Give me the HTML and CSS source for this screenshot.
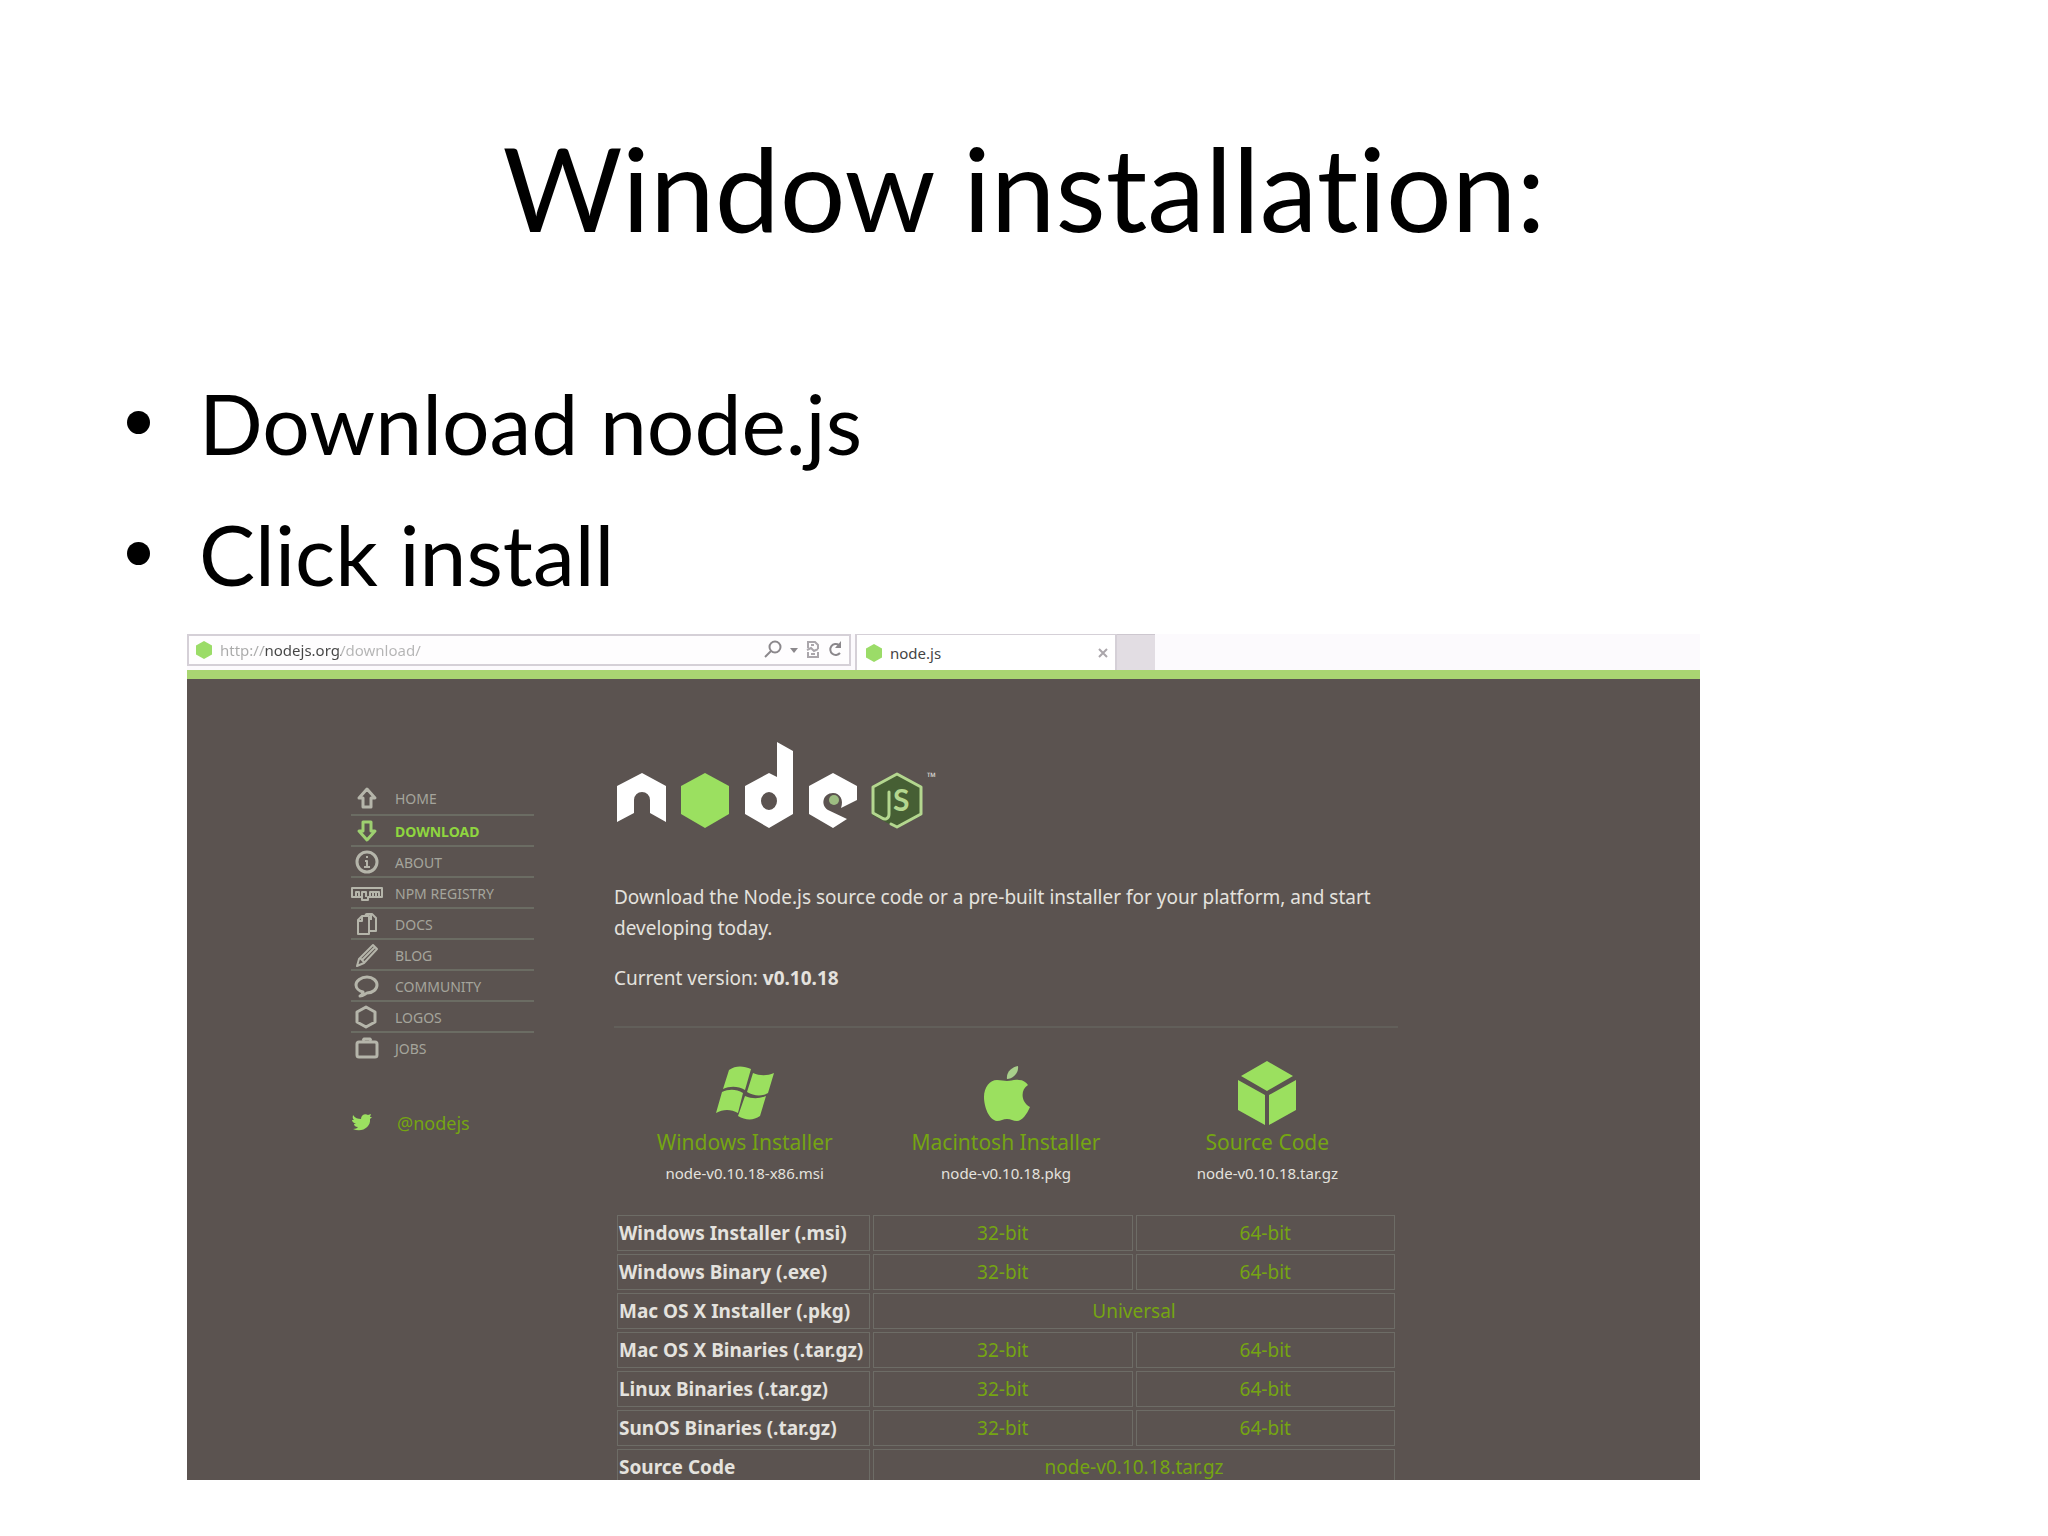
FILE: index.html
```html
<!DOCTYPE html>
<html lang="en">
<head>
<meta charset="utf-8">
<title>Window installation</title>
<link rel="stylesheet" href="styles.css">
</head>
<body>
<main class="slide">
  <h1 class="title">Window installation:</h1>
  <ul class="steps">
    <li>Download node.js</li>
    <li>Click install</li>
  </ul>
  <section class="browser" aria-label="node.js download page">
    <div class="chrome">
      <div class="address">
        <svg class="favicon" viewBox="0 0 18 18" aria-hidden="true"><path d="M9 0l8 4.500v9L9 18l-8-4.500v-9z" fill="#9bdc68"/></svg>
        <input class="url" type="text" aria-label="Address" value="http://nodejs.org/download/">
        <button class="tool" aria-label="Search"><svg width="20" height="20" viewBox="0 0 20 20"><circle cx="12" cy="7" r="5.500"/><path d="M8 11l-6 6"/></svg></button>
        <button class="tool" aria-label="Show history"><svg width="10" height="20" viewBox="0 0 10 20"><path class="solid" d="M1 8h8l-4 5z"/></svg></button>
        <button class="tool pale" aria-label="Compatibility view"><svg width="16" height="20" viewBox="0 0 16 20"><path d="M3 8V2h7l3 3v4M2 10l4-2 3 3 4-2M3 12v5h10v-5M6 14h4M6 5h3"/></svg></button>
        <button class="tool" aria-label="Refresh"><svg width="16" height="20" viewBox="0 0 16 20"><path d="M13 13a5.500 5.500 0 1 1-1-8"/><path class="solid" d="M14 1v7H8z"/></svg></button>
      </div>
      <div class="tab">
        <svg class="favicon" viewBox="0 0 18 18" aria-hidden="true"><path d="M9 0l8 4.500v9L9 18l-8-4.500v-9z" fill="#9bdc68"/></svg>
        <span class="tab-name">node.js</span>
        <button class="tool pale" aria-label="Close tab"><svg width="12" height="12" viewBox="0 0 12 12"><path d="M2 2l8 8M10 2l-8 8"/></svg></button>
      </div>
      <button class="new-tab" aria-label="New tab"></button>
    </div>
    <div class="site">
      <nav class="side">
        <ul class="menu">
          <li><a href="#home"><svg viewBox="0 0 32 26"><path d="M16 4l8 9h-4v9h-8v-9H8z"/></svg>HOME</a></li>
          <li><a class="active" href="#download"><svg viewBox="0 0 32 26"><path d="M16 22l8-9h-4V4h-8v9H8z"/></svg>DOWNLOAD</a></li>
          <li><a href="#about"><svg viewBox="0 0 32 26"><circle cx="16" cy="13" r="10"/><path class="thin" d="M14 12h2v6M13 18h6M15 8h2"/></svg>ABOUT</a></li>
          <li><a href="#npm"><svg viewBox="0 0 32 26"><path class="thin" d="M1 8h30v9H17v3h-6v-3H1zM5 17v-5h3v5M11 17v-5h4v5M19 17v-5h3v5M22 12h3v5M25 12h3v5"/></svg>NPM REGISTRY</a></li>
          <li><a href="#docs"><svg viewBox="0 0 32 26"><path class="thin" d="M7 9l4-4h7v18H7zM11 5v5H7M14 4l2-1h5l4 4v13h-6M20 4v5"/></svg>DOCS</a></li>
          <li><a href="#blog"><svg viewBox="0 0 32 26"><path class="thin" d="M6 24l2-7L22 3l4 4-13 14zM9 16l4 4M11 18L24 5"/></svg>BLOG</a></li>
          <li><a href="#community"><svg viewBox="0 0 32 26"><path d="M9 23c2-1 3-2 3-4-4-1-7-4-7-7 0-4 5-8 11-8s10 4 10 8-4 8-10 8c-2 1-4 3-7 3z"/></svg>COMMUNITY</a></li>
          <li><a href="#logos"><svg viewBox="0 0 32 26"><path d="M15 3l9 5v10l-9 5-9-5V8z"/></svg>LOGOS</a></li>
          <li><a href="#jobs"><svg viewBox="0 0 32 26"><rect x="6" y="7" width="20" height="15" rx="2"/><path d="M12 6l1-2h6l1 2"/></svg>JOBS</a></li>
        </ul>
        <a class="twitter" href="#twitter"><svg viewBox="0 0 32 26" aria-hidden="true"><path d="M2 19c3 0 4-1 5-2-3 0-4-2-4-3h2c-3-1-4-3-4-4l2 0C1 8 2 6 2 5c2 3 5 4 8 4 0-4 4-6 7-4l3-1-1 3h2l-2 2c1 8-8 14-17 10z"/></svg>@nodejs</a>
      </nav>
      <div class="content">
        <svg class="logo" viewBox="0 0 330 90" role="img" aria-label="node.js">
          <path fill="#fff" d="M3 82V46l25-13 24 13v36l-16-9V60a8 8 0 0 0-16 0v13z"/>
          <path fill="#9be060" d="M91 33l24 13v28L91 88 67 74V46z"/>
          <path fill="#fff" fill-rule="evenodd" d="M131 46l24-13 8 4V2l16 9v63l-24 14-24-14zM147 61a8 9 0 1 0 16 0 8 9 0 0 0-16 0z"/>
          <path fill="#fff" d="M195 46l24-13 24 13v14l-16 8c3-8-1-15-8-15-10 0-13 12-5 17l19 9L219 88 195 74z"/>
          <circle cx="220" cy="60" r="5" fill="#9dbd82"/>
          <path fill="#465f34" d="M283 33l25 13v29l-25 13-25-13V46z"/>
          <path d="M275 52v22c0 5-4 6-7 4l-9-5V47l24-13 24 13v27l-24 13-6-3" fill="none" stroke="#b4d78f" stroke-width="3" stroke-linejoin="round" stroke-linecap="round"/>
          <text class="logo-s" x="279" y="71">S</text>
          <text class="logo-tm" x="313" y="41">™</text>
        </svg>
        <p class="intro">Download the Node.js source code or a pre-built installer for your platform, and start developing today.</p>
        <p class="intro">Current version: <b>v0.10.18</b></p>
        <hr class="rule">
        <div class="installers">
          <a class="installer" href="#win"><svg width="70" height="66" viewBox="0 0 70 66" aria-hidden="true"><path d="M19 10c7-5 15-4 22-1l-6 21c-7-4-15-4-22-1zM43 13c7 3 14 3 21 0l-6 20c-7 4-14 3-21-1zM12 32c7-3 14-3 21 1l-5 20c-7-4-15-4-22 0zM35 36c7 3 14 3 21 0l-6 20c-7 5-15 4-22 0z"/></svg><span class="name">Windows Installer</span><span class="file">node-v0.10.18-x86.msi</span></a>
          <a class="installer" href="#mac"><svg width="70" height="66" viewBox="0 0 70 66" aria-hidden="true"><path class="leaf" d="M36 19c-1-7 5-12 11-13 1 7-5 13-11 13z"/><path d="M36 21c4 0 7-2 12-1 4 0 7 2 9 5-8 5-7 17 2 22-3 7-8 14-13 14-4 0-6-2-10-2s-6 2-10 2C18 60 13 47 13 37c0-10 6-17 13-17 4 0 7 1 10 1z"/></svg><span class="name">Macintosh Installer</span><span class="file">node-v0.10.18.pkg</span></a>
          <a class="installer" href="#src"><svg width="70" height="66" viewBox="0 0 70 66" aria-hidden="true"><path d="M35 1l26 15-26 15L9 16zM6 20l27 15v30L6 50zM64 20L37 35v30l27-15z"/></svg><span class="name">Source Code</span><span class="file">node-v0.10.18.tar.gz</span></a>
        </div>
        <table class="downloads">
          <tr><th scope="row">Windows Installer (.msi)</th><td><a href="#d">32-bit</a></td><td><a href="#d">64-bit</a></td></tr>
          <tr><th scope="row">Windows Binary (.exe)</th><td><a href="#d">32-bit</a></td><td><a href="#d">64-bit</a></td></tr>
          <tr><th scope="row">Mac OS X Installer (.pkg)</th><td colspan="2"><a href="#d">Universal</a></td></tr>
          <tr><th scope="row">Mac OS X Binaries (.tar.gz)</th><td><a href="#d">32-bit</a></td><td><a href="#d">64-bit</a></td></tr>
          <tr><th scope="row">Linux Binaries (.tar.gz)</th><td><a href="#d">32-bit</a></td><td><a href="#d">64-bit</a></td></tr>
          <tr><th scope="row">SunOS Binaries (.tar.gz)</th><td><a href="#d">32-bit</a></td><td><a href="#d">64-bit</a></td></tr>
          <tr><th scope="row">Source Code</th><td colspan="2"><a href="#d">node-v0.10.18.tar.gz</a></td></tr>
        </table>
      </div>
    </div>
  </section>
</main>
</body>
</html>
```
FILE: styles.css
```css
* { box-sizing: border-box; }
body { margin: 0; background: #fff; color: #000; font-family: "Noto Sans", sans-serif; }
a { color: inherit; text-decoration: none; }
button { border: 0; padding: 0; background: none; }

.slide { display: flex; flex-direction: column; height: 100vh; padding: 116px 0 56px; }
.title { margin: 0; font: 400 116px/144px Lato, sans-serif; font-variant-ligatures: none; text-align: center; }
.steps { margin: 97px 0 0; padding: 0 0 0 127px; list-style: none; font: 400 84px/131px Lato, sans-serif; }
.steps li { display: flex; align-items: center; gap: 49px; }
.steps li::before { content: ""; width: 23px; height: 23px; border-radius: 50%; background: #000; }

.browser { display: flex; flex-direction: column; flex: 1; min-height: 0; margin: 15px 17% 0 187px; overflow: hidden; background: #fcfafd; }
.chrome { display: flex; align-items: flex-start; height: 36px; flex: none; }
.address { display: flex; align-items: center; gap: 6px; width: 664px; height: 32px; padding: 0 6px; border: 2px solid #d5d0d7; background: #fefdfe; }
.favicon { width: 18px; height: 18px; flex: none; }
.url { flex: 1; min-width: 0; padding: 0 0 0 1px; border: 0; background: linear-gradient(90deg, #a9a9a9 45px, #444 45px 122px, #b4b4b4 122px); -webkit-background-clip: text; background-clip: text; color: transparent; font: 15px/24px "Noto Sans", sans-serif; outline: 0; }
.tool { display: flex; color: #8b888c; }
.tool svg { fill: none; stroke: currentColor; stroke-width: 2; }
.tool .solid { fill: currentColor; stroke: none; }
.pale { color: #aaa6ab; }
.tab { display: flex; align-items: center; gap: 7px; width: 262px; height: 36px; margin-left: 4px; padding: 0 6px 0 8px; border: solid #d5d0d7; border-width: 1px 2px 0; background: #fff; }
.tab-name { flex: 1; color: #444; font-size: 15px; }
.new-tab { width: 38px; height: 36px; background: #e2dde3; border-top: 1px solid #cdc7cf; }

.site { display: flex; flex: 1; min-height: 0; gap: 80px; padding: 0 0 0 164px; border-top: 9px solid #a9d572; background: #5b5350; color: #e4e2de; }
.side { width: 183px; flex: none; padding-top: 104px; }
.menu { margin: 0; padding: 0; list-style: none; color: #a5a59c; font-size: 14px; }
.menu li { height: 31px; }
.menu li + li { border-top: 2px solid #6b6c63; }
.menu a { display: flex; align-items: center; gap: 12px; height: 30px; }
.menu svg { width: 32px; height: 26px; fill: none; stroke: #b5b5aa; stroke-width: 3; stroke-linejoin: round; }
.menu .thin { stroke-width: 2; }
.menu .active { color: #8fd63f; font-weight: 700; }
.active svg { stroke: #9dd070; }
.twitter { display: flex; align-items: center; gap: 14px; margin-top: 46px; color: #75a512; font-size: 18px; line-height: 30px; }
.twitter svg { width: 32px; height: 26px; fill: #9be060; }

.content { width: 784px; padding-top: 61px; }
.logo { display: block; width: 330px; height: 90px; margin-bottom: 52px; overflow: visible; }
.logo-s { fill: #b4d78f; font: 700 30px Lato, sans-serif; }
.logo-tm { fill: #d8d4d0; font: 12px "Noto Sans", sans-serif; }
.intro { margin: 0 0 19px; font-size: 19px; line-height: 31px; }
.rule { margin: 32px 0; border: 0; border-top: 2px solid #625f5a; }
.installers { display: grid; grid-template-columns: repeat(3, 1fr); }
.installer { display: flex; flex-direction: column; align-items: center; }
.installer svg { fill: #9be05f; }
.installer .leaf { fill: #a8cf8b; }
.name { color: #75a512; font-size: 21px; line-height: 32px; }
.file { font-size: 15px; line-height: 30px; }
.downloads { width: 100%; margin-top: 24px; table-layout: fixed; border-spacing: 3px; font-size: 19px; line-height: 24px; }
.downloads th, .downloads td { height: 36px; padding: 0 2px; border: 1px solid #6d6c66; text-align: center; }
.downloads th { width: 253px; padding: 0 1px; text-align: left; white-space: nowrap; }
.downloads td { color: #75a512; }
```
